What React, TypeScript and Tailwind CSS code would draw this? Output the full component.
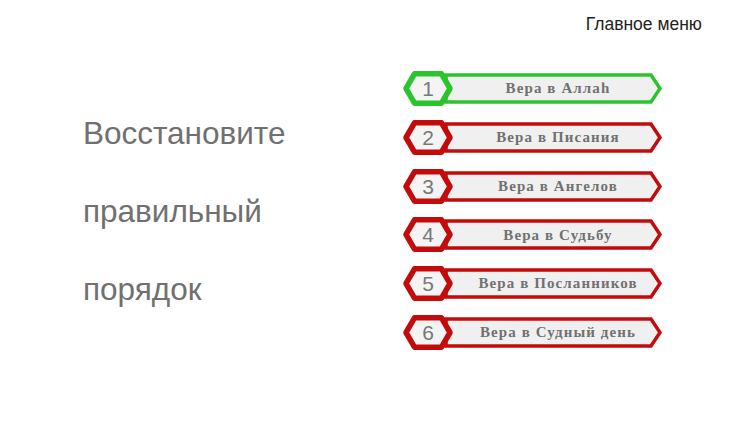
const items = [
  { n: 1, label: "Вера в Аллаһ", ok: true },
  { n: 2, label: "Вера в Писания", ok: false },
  { n: 3, label: "Вера в Ангелов", ok: false },
  { n: 4, label: "Вера в Судьбу", ok: false },
  { n: 5, label: "Вера в Посланников", ok: false },
  { n: 6, label: "Вера в Судный день", ok: false },
];

function StepButton({ n, label, ok }: { n: number; label: string; ok: boolean }) {
  const stroke = ok ? "#2cc42c" : "#c30b0b";
  return (
    <div className="relative w-[262px] h-[35px]">
      <svg width="262" height="35" viewBox="0 0 262 35" className="absolute inset-0">
        <path
          d="M44 4 L249 4 L258 17.5 L249 31 L44 31 Z"
          fill="#f0f0f0"
          stroke={stroke}
          strokeWidth="3.5"
          strokeLinejoin="miter"
        />
        <path
          d="M4 17.5 L12.5 2.8 L39.5 2.8 L48 17.5 L39.5 32.2 L12.5 32.2 Z"
          fill="#f4f4f4"
          stroke={stroke}
          strokeWidth="5.5"
          strokeLinejoin="round"
        />
      </svg>
      <div className="relative flex h-full items-center">
        <span className="w-[52px] text-center text-[21px] leading-none text-[#787878] font-['Liberation_Sans',Arial,sans-serif]">
          {n}
        </span>
        <span className="w-[208px] text-center text-[15px] font-bold tracking-[1.1px] text-[#717171] font-['Liberation_Serif','Times_New_Roman',serif]">
          {label}
        </span>
      </div>
    </div>
  );
}

export default function App() {
  return (
    <div className="w-[750px] h-[422px] bg-white flex flex-col overflow-hidden">
      <div className="flex justify-end pr-[48px] pt-[12px] h-[35px]">
        <span className="text-[17.5px] leading-6 text-[#222] font-['Liberation_Sans',Arial,sans-serif]">
          Главное меню
        </span>
      </div>

      <div className="flex">
        <div className="w-[402px] pl-[83px] pt-[78px] flex flex-col gap-[38px] text-[31.5px] leading-10 text-[#707070] font-['Liberation_Sans',Arial,sans-serif]">
          <p>Восстановите</p>
          <p>правильный</p>
          <p>порядок</p>
        </div>

        <div className="pt-[36px] flex flex-col gap-[13.8px]">
          {items.map((it) => (
            <StepButton key={it.n} {...it} />
          ))}
        </div>
      </div>
    </div>
  );
}
